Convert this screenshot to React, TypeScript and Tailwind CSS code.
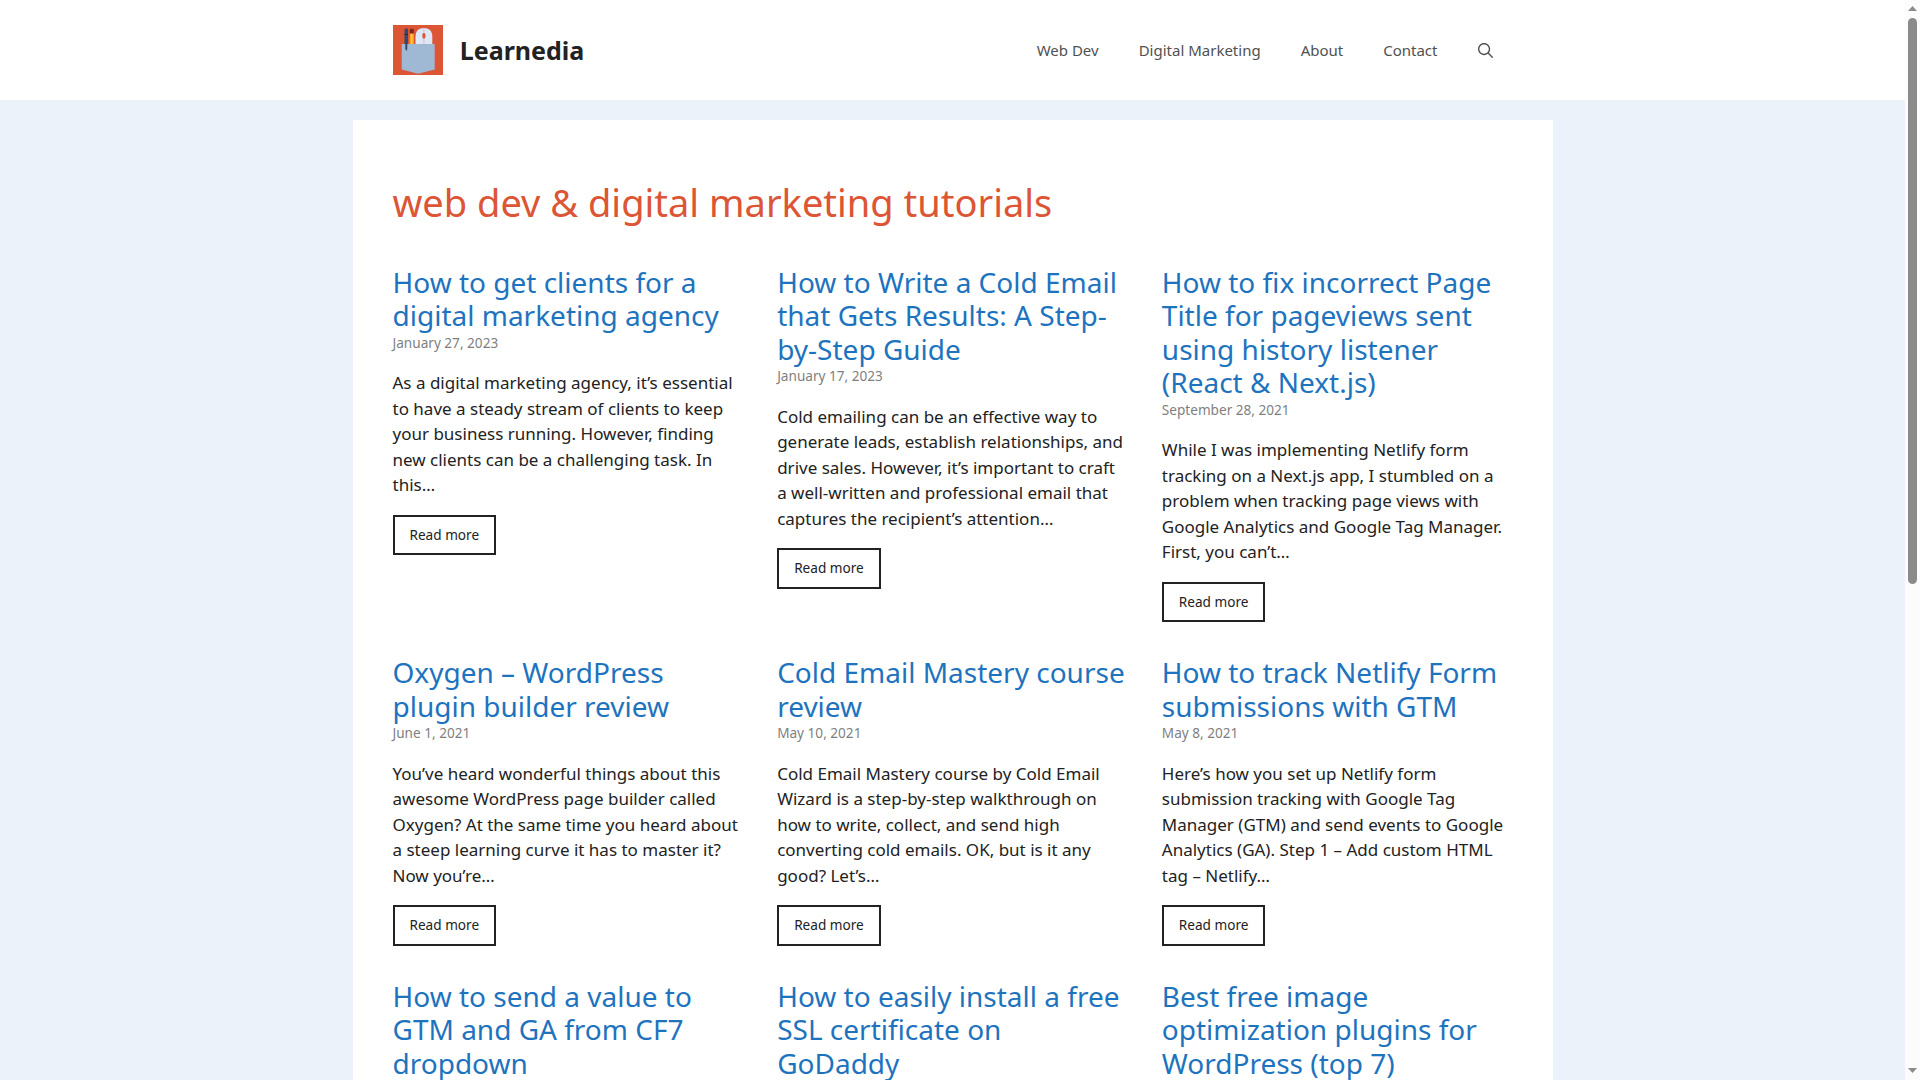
type PostType = {
  title: string;
  date: string;
  excerpt: string;
};

const posts: PostType[] = [
  {
    title: "How to get clients for a digital marketing agency",
    date: "January 27, 2023",
    excerpt:
      "As a digital marketing agency, it’s essential to have a steady stream of clients to keep your business running. However, finding new clients can be a challenging task. In this…",
  },
  {
    title: "How to Write a Cold Email that Gets Results: A Step-by-Step Guide",
    date: "January 17, 2023",
    excerpt:
      "Cold emailing can be an effective way to generate leads, establish relationships, and drive sales. However, it’s important to craft a well-written and professional email that captures the recipient’s attention…",
  },
  {
    title:
      "How to fix incorrect Page Title for pageviews sent using history listener (React & Next.js)",
    date: "September 28, 2021",
    excerpt:
      "While I was implementing Netlify form tracking on a Next.js app, I stumbled on a problem when tracking page views with Google Analytics and Google Tag Manager. First, you can’t…",
  },
  {
    title: "Oxygen – WordPress plugin builder review",
    date: "June 1, 2021",
    excerpt:
      "You’ve heard wonderful things about this awesome WordPress page builder called Oxygen? At the same time you heard about a steep learning curve it has to master it? Now you’re…",
  },
  {
    title: "Cold Email Mastery course review",
    date: "May 10, 2021",
    excerpt:
      "Cold Email Mastery course by Cold Email Wizard is a step-by-step walkthrough on how to write, collect, and send high converting cold emails. OK, but is it any good? Let’s…",
  },
  {
    title: "How to track Netlify Form submissions with GTM",
    date: "May 8, 2021",
    excerpt:
      "Here’s how you set up Netlify form submission tracking with Google Tag Manager (GTM) and send events to Google Analytics (GA). Step 1 – Add custom HTML tag – Netlify…",
  },
  { title: "How to send a value to GTM and GA from CF7 dropdown", date: "", excerpt: "" },
  { title: "How to easily install a free SSL certificate on GoDaddy", date: "", excerpt: "" },
  { title: "Best free image optimization plugins for WordPress (top 7)", date: "", excerpt: "" },
];

const menu = ["Web Dev", "Digital Marketing", "About", "Contact"];

const Logo = () => (
  <svg width="50" height="50" viewBox="0 0 50 50">
    <rect width="50" height="50" fill="#dc5535" />
    {/* pen */}
    <path d="M11.500 4.500q0-1 1.800-1t1.700 1V20h-3.500z" fill="#34496b" />
    <path d="M11.500 9h3.500v1h-3.500z" fill="#1f2c47" />
    {/* pencil */}
    <path d="M16.700 9h4.100v11h-4.100z" fill="#f9a92a" />
    <path d="M16.700 5q0-1.500 2-1.500t2.100 1.500v3h-4.100z" fill="#7d2a1c" />
    <path d="M18.200 9h1v10h-1z" fill="#fbd35c" />
    {/* mouse */}
    <path d="M22.500 20V12c0-5.500 2.500-9 8.400-9s8.400 3.500 8.400 9v8z" fill="#dce7f8" />
    <path d="M30.900 3v16" stroke="#e5a99d" strokeWidth=".7" />
    <rect x="29.400" y="8" width="3" height="5.500" rx="1.500" fill="#dc5535" />
    {/* pocket */}
    <path d="M8.700 19h33v25.500L25 48.800 8.700 44.500z" fill="#9fb8d3" />
    <path d="M12.300 19h2v5l-1 2-1-2z" fill="#34496b" />
  </svg>
);

const SearchIcon = () => (
  <svg width="15" height="15" viewBox="0 0 512 512" fill="currentColor">
    <path
      fillRule="evenodd"
      clipRule="evenodd"
      d="M208 48c-88.366 0-160 71.634-160 160s71.634 160 160 160 160-71.634 160-160S296.366 48 208 48zM0 208C0 93.125 93.125 0 208 0s208 93.125 208 208c0 48.741-16.765 93.566-44.843 129.024l133.826 134.018c9.366 9.379 9.355 24.575-.025 33.941-9.379 9.366-24.575 9.355-33.941-.025L337.238 370.987C301.747 399.167 256.839 416 208 416 93.125 416 0 322.875 0 208z"
    />
  </svg>
);

const Post = ({ post }: { post: PostType }) => (
  <article className="mb-[34px]">
    <h2 className="text-[28px] leading-[33.6px] text-[#1e73be]">{post.title}</h2>
    {post.date && (
      <>
        <p className="mb-[17px] text-[13.6px] leading-[20.4px] text-[#7f7f7f]">{post.date}</p>
        <p className="mb-[17px]">{post.excerpt}</p>
        <a className="block w-fit border-2 border-[#222222] px-[15px] py-2 text-[13.6px] leading-[20.4px]">
          Read more
        </a>
      </>
    )}
  </article>
);

// page scroll bar along the right edge
const ScrollBar = () => (
  <div className="flex h-full w-[15px] shrink-0 flex-col items-center bg-[#fcfcfc] text-[#8b8b8b]">
    <svg className="mt-[6px] shrink-0" width="9" height="5" viewBox="0 0 9 5" fill="currentColor">
      <path d="M4.500 0L9 5H0z" />
    </svg>
    <div className="mt-[7px] h-[566px] w-[9px] shrink-0 rounded-full bg-[#8b8b8b]" />
    <svg className="mt-auto mb-[7px] shrink-0" width="9" height="5" viewBox="0 0 9 5" fill="currentColor">
      <path d="M0 0h9L4.500 5z" />
    </svg>
  </div>
);

const App = () => {
  return (
    <div className="flex h-screen overflow-hidden bg-[#ebf2f9] font-['Noto_Sans',sans-serif] text-[17px] leading-[25.5px] text-[#222222]">
      <div className="min-w-0 flex-1">
        <header className="bg-white">
          <div className="mx-auto flex h-[100px] w-[1200px] items-center px-10">
            <Logo />
            <p className="ml-[17.25px] pt-px text-[25px] leading-[37.5px] font-bold">Learnedia</p>
            <nav className="ml-auto flex items-center text-[15px] leading-[26px] text-[#515151]">
              {menu.map((item) => (
                <a key={item} className="px-5">
                  {item}
                </a>
              ))}
              <a className="px-5 pt-px">
                <SearchIcon />
              </a>
            </nav>
          </div>
        </header>
        <main className="mx-auto mt-5 w-[1200px] bg-white px-10 pt-[60px]">
          <h1 className="mb-10 text-[38px] leading-[45.6px] text-[#dc5535]">
            web dev &amp; digital marketing tutorials
          </h1>
          <div className="grid grid-cols-3 gap-x-[34px]">
            {posts.map((post) => (
              <Post key={post.title} post={post} />
            ))}
          </div>
        </main>
      </div>
      <ScrollBar />
    </div>
  );
};

export default App;
